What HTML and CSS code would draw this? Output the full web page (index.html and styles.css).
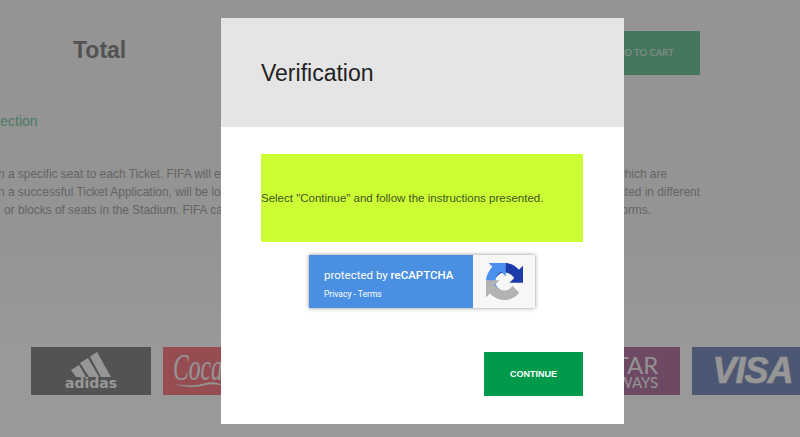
FILE: index.html
```html
<!DOCTYPE html>
<html lang="en">
<head>
<meta charset="utf-8">
<title>Verification</title>
<link rel="stylesheet" href="styles.css">
</head>
<body>
<main class="page">
  <div class="top-row">
    <h2 class="total">Total</h2>
    <button class="cart">ADD TO CART</button>
  </div>
  <div class="section-link">Selection</div>
  <div class="para">
    <p class="line"><span>n a specific seat to each Ticket. FIFA will endeavour to</span><span class="tail t1">which are</span></p>
    <p class="line"><span>n a successful Ticket Application, will be located</span><span class="tail t2">allocated in different</span></p>
    <p class="line ind"><span>or blocks of seats in the Stadium. FIFA cannot</span><span class="tail t3">forms.</span></p>
  </div>
  <div class="sponsors">
    <div class="logo adidas">
      <svg class="adi-mark" viewBox="0 0 40 25" aria-hidden="true"><path d="M0 18 L8 13 L15 25 H5Z M9 11 L17 6 L28 25 H18Z M19 4.500 L26 0 L40 25 H30Z"/></svg>
      <span class="adi-text">adidas</span>
    </div>
    <div class="logo coke">
      <span class="coke-word">Coca-Cola</span>
      <svg class="coke-swoosh" viewBox="0 0 60 8" aria-hidden="true"><path d="M0 4 Q20 8 36 3 Q46 0 60 6 Q46 3 38 5 Q18 11 0 4Z"/></svg>
    </div>
    <div class="logo spacer"></div>
    <div class="logo spacer"></div>
    <div class="logo qatar"><span class="q1">QATAR</span><span class="q2">AIRWAYS</span></div>
    <div class="logo visa"><span>VISA</span></div>
  </div>
</main>
<div class="overlay"></div>
<section class="modal">
  <header class="modal-head"><h1>Verification</h1></header>
  <div class="modal-body">
    <div class="notice">Select "Continue" and follow the instructions presented.</div>
    <div class="captcha">
      <div class="cap-blue">
        <div class="cap-title">protected by <b>reCAPTCHA</b></div>
        <div class="cap-links">Privacy - Terms</div>
      </div>
      <div class="cap-icon">
        <svg viewBox="0 0 64 64" width="37" height="37" aria-hidden="true">
          <path class="rc-dark" d="M64 31.955l-.033-1.37V4.687l-7.16 7.16C50.948 4.674 42.033.093 32.05.093c-10.4 0-19.622 4.96-25.458 12.64l11.736 11.86a15.55 15.55 0 0 1 4.754-5.334c2.05-1.6 4.952-2.906 8.968-2.906.485 0 .86.07 1.135.163 6.634.523 12.385 4.185 15.77 9.5l-8.307 8.308c10.52-.04 22.4-.066 27.295.006"/>
          <path class="rc-light" d="M31.862.094l-1.37.033H4.594l7.16 7.16C4.58 13.147 0 22.06 0 32.046c0 10.4 4.96 19.622 12.64 25.458L24.5 45.768a15.55 15.55 0 0 1-5.334-4.754c-1.6-2.05-2.906-4.952-2.906-8.968 0-.485.07-.86.163-1.135.523-6.634 4.185-12.385 9.5-15.77l8.308 8.308c-.04-10.52-.066-22.4.006-27.295"/>
          <path class="rc-grey" d="M.001 32.045l.033 1.37v25.898l7.16-7.16c5.86 7.173 14.774 11.754 24.76 11.754 10.4 0 19.622-4.96 25.458-12.64L45.677 39.4a15.55 15.55 0 0 1-4.754 5.334c-2.05 1.6-4.952 2.906-8.968 2.906-.485 0-.86-.07-1.135-.163-6.634-.523-12.385-4.185-15.77-9.5l8.308-8.308c-10.52.04-22.4.066-27.295-.006"/>
        </svg>
      </div>
    </div>
    <div class="actions"><button class="continue">CONTINUE</button></div>
  </div>
</section>
</body>
</html>
```

FILE: styles.css
```css
* { box-sizing: border-box; }
html, body { margin: 0; height: 437px; overflow: hidden; background: #f7f7f7; }
body { font-family: "Liberation Sans", Arial, sans-serif; }
.page { width: 800px; height: 437px; overflow: hidden; position: relative; background: linear-gradient(#f7f7f7, #f7f7f7 240px, #ffffff 340px); }
.top-row { display: flex; height: 75px; padding: 31px 100px 0 0; justify-content: space-between; }
.total { margin: 5px 0 0 73px; font-size: 23px; line-height: 28px; font-weight: 700; color: #8a8a8a; }
.cart { width: 120px; height: 44px; border: 0; background: #72c69d; color: #d0e8da; font: 700 9.5px Lato, sans-serif; text-align: right; padding: 0 26px 2px 0; }
.section-link { margin: 37px 0 0 -20px; font-size: 14px; line-height: 18px; color: #7fcba7; }
.para { margin: 35px 0 0 -2px; width: 702px; font-size: 11.9px; line-height: 18px; color: #a8a8a8; }
.line { margin: 0; display: flex; justify-content: space-between; white-space: nowrap; }
.ind { padding-left: 6px; }
.t1 { margin-right: 33px; }
.t3 { margin-right: 49px; }
.sponsors { margin-top: 128px; margin-left: 31px; display: flex; gap: 12.3px; width: 900px; }
.logo { flex: 0 0 120px; height: 48px; display: flex; align-items: center; justify-content: center; overflow: hidden; white-space: nowrap; }
.spacer { background: #ffffff; }
.adidas { background: #8c8a8a; flex-direction: column; justify-content: flex-start; padding-top: 5px; }
.adi-mark { width: 40px; height: 25px; fill: #fafafa; flex: none; }
.adi-text { font: 700 14px/13px "DejaVu Sans", sans-serif; color: #fafafa; }
.coke { background: #fa8088; color: #f8f8f8; justify-content: flex-start; padding-left: 10px; position: relative; }
.coke-word { display: inline-block; font: italic 400 38px "Liberation Serif", serif; transform: scaleX(.62); transform-origin: left center; margin-top: -8px; }
.coke-swoosh { position: absolute; left: 12px; top: 33px; width: 50px; height: 8px; fill: #f8f8f8; }
.qatar { background: #b87aa6; color: #f4f4f4; flex-direction: column; align-items: flex-end; padding-right: 22px; font-family: Lato, sans-serif; }
.q1 { font-size: 24px; line-height: 23px; }
.q2 { font-size: 15px; line-height: 13px; }
.visa { background: #7f93c0; color: #fafafa; font: italic 700 36px "Liberation Sans", sans-serif; letter-spacing: -1px; -webkit-text-stroke: .6px #fafafa; }
.overlay { position: fixed; inset: 0; background: rgba(0, 0, 0, .4); }
.modal { position: absolute; left: 221px; top: 18px; width: 403px; height: 406px; background: #fff; }
.modal-head { height: 109px; background: #e5e5e5; padding: 40px 40px 0; }
.modal-head h1 { margin: 0; font-size: 23px; line-height: 30px; font-weight: 400; color: #222; }
.modal-body { padding: 27px 41px 0 40px; }
.notice { height: 88px; background: #ccff33; display: flex; align-items: center; font-size: 11.5px; color: #445222; }
.captcha { width: 226px; height: 53px; margin: 13px auto 0; display: flex; box-shadow: 0 0 4px rgba(0, 0, 0, .45); font-family: Roboto, sans-serif; }
.cap-blue { width: 164px; background: #4a90e2; color: #fff; padding: 13px 0 0 15px; }
.cap-title { font-size: 11.5px; line-height: 15px; }
.cap-title b { font-weight: 500; }
.cap-links { font-size: 8.5px; line-height: 12px; margin-top: 5px; }
.cap-icon { flex: 1; background: #f7f7f7; display: flex; align-items: center; justify-content: center; }
.rc-light { fill: #4a90ee; }
.rc-dark { fill: #1c3aa9; }
.rc-grey { fill: #b3b3b3; }
.actions { display: flex; justify-content: flex-end; margin-top: 44px; }
.continue { width: 99px; height: 44px; border: 0; background: #009a4d; color: #fff; font: 700 9px "Liberation Sans", sans-serif; }
```
